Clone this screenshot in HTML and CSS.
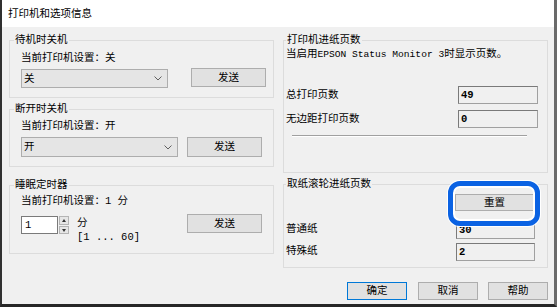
FILE: index.html
```html
<!DOCTYPE html>
<html lang="zh-CN">
<head>
    <meta charset="UTF-8">
    <title>打印机和选项信息</title>
    <link rel="stylesheet" href="styles.css">
</head>
<body>
    <div class="window">
        <div class="titlebar">打印机和选项信息</div>

        <div class="client">
            <div class="columns">
                <div class="col">
                    <fieldset class="group g-standby">
                        <legend>待机时关机</legend>
                        <div class="body">
                            <div class="line">当前打印机设置：关</div>
                            <div class="row">
                                <div class="combo combo-short">
                                    <span>关</span>
                                    <svg class="chev" viewBox="0 0 8 5"><path d="M0.5 0.5 L4 4 L7.5 0.5" fill="none" stroke="#606060" stroke-width="1"/></svg>
                                </div>
                                <button class="btn">发送</button>
                            </div>
                        </div>
                    </fieldset>

                    <fieldset class="group g-off">
                        <legend>断开时关机</legend>
                        <div class="body">
                            <div class="line">当前打印机设置：开</div>
                            <div class="row">
                                <div class="combo combo-long">
                                    <span>开</span>
                                    <svg class="chev" viewBox="0 0 8 5"><path d="M0.5 0.5 L4 4 L7.5 0.5" fill="none" stroke="#606060" stroke-width="1"/></svg>
                                </div>
                                <button class="btn">发送</button>
                            </div>
                        </div>
                    </fieldset>

                    <fieldset class="group g-sleep">
                        <legend>睡眠定时器</legend>
                        <div class="body">
                            <div class="line">当前打印机设置：1 分</div>
                            <div class="row">
                                <div class="spin">
                                    <div class="spin-input">1</div>
                                    <div class="spin-arrows">
                                        <div class="arrow arrow-up"></div>
                                        <div class="arrow arrow-down"></div>
                                    </div>
                                </div>
                                <div class="unit">
                                    <div>分</div>
                                    <div class="range">[1 ... 60]</div>
                                </div>
                                <button class="btn">发送</button>
                            </div>
                        </div>
                    </fieldset>
                </div>

                <div class="col">
                    <fieldset class="group g-count">
                        <legend>打印机进纸页数</legend>
                        <div class="body">
                            <div class="desc">当启用<span class="latin">EPSON Status Monitor 3</span>时显示页数。</div>
                            <div class="field first">
                                <span>总打印页数</span>
                                <div class="textbox">49</div>
                            </div>
                            <div class="field">
                                <span>无边距打印页数</span>
                                <div class="textbox">0</div>
                            </div>
                            <div class="separator"></div>
                        </div>
                    </fieldset>

                    <fieldset class="group g-roller">
                        <legend>取纸滚轮进纸页数</legend>
                        <div class="body">
                            <div class="reset-row">
                                <button class="btn btn-reset">重置</button>
                            </div>
                            <div class="field first">
                                <span>普通纸</span>
                                <div class="textbox">30</div>
                            </div>
                            <div class="field">
                                <span>特殊纸</span>
                                <div class="textbox">2</div>
                            </div>
                        </div>
                    </fieldset>
                </div>
            </div>

            <div class="footer">
                <button class="btn btn-dialog btn-default">确定</button>
                <button class="btn btn-dialog">取消</button>
                <button class="btn btn-dialog">帮助</button>
            </div>
        </div>
    </div>
</body>
</html>
```

FILE: styles.css
```css
* {
    margin: 0;
    padding: 0;
    box-sizing: border-box;
}

body {
    font-family: "Liberation Mono", "Noto Sans CJK SC", monospace;
    font-size: 10.5px;
    line-height: 14px;
    color: #000;
    background: #2b2b2b;
}

.window {
    width: 557px;
    height: 307px;
    background: #f0f0f0;
    border-left: 2px solid #303030;
    border-right: 3px solid #6a6a6a;
    border-bottom: 3px solid #262626;
    display: flex;
    flex-direction: column;
}

.titlebar {
    height: 27px;
    background: #fff;
    padding-left: 6px;
    line-height: 29px;
    font-size: 10.5px;
}

.client {
    padding: 6px 6px 0 7px;
}

.columns {
    display: flex;
    gap: 9px;
    height: 235px;
}

.col {
    width: 265px;
    display: flex;
    flex-direction: column;
}

/* group boxes */

.group {
    border: 1px solid #dcdcdc;
    margin: 0;
    padding: 0;
    min-width: 0;
}

.group legend {
    margin-left: 4px;
    padding: 0 1px;
    line-height: 14px;
}

.col + .col .group legend {
    margin-left: 2px;
}

.g-standby { height: 65px; }
.g-off { height: 65px; margin-top: 4px; }
.g-sleep { height: 76px; margin-top: 11px; }
.g-count { height: 140px; }
.g-roller { height: 91px; margin-top: 4px; }

.g-standby .body { padding: 0 7px 0 11px; }
.g-off .body { padding: 0 11px 0 11px; }
.g-sleep .body { padding: 0 11px 0 11px; }

.g-standby .line { margin-top: 4px; }
.g-standby .row { margin-top: 3px; }
.g-off .line { margin-top: 3px; }
.g-off .row { margin-top: 4px; }
.g-sleep .line { margin-top: 2px; }
.g-sleep .row { margin-top: 6px; }

.row {
    display: flex;
    align-items: flex-start;
}

.row .btn {
    margin-left: auto;
}

/* controls */

.btn {
    font: inherit;
    background: #e1e1e1;
    border: 1px solid #adadad;
    color: #000;
    width: 75px;
    height: 20px;
    line-height: 16px;
    text-align: center;
}

.g-standby .btn { height: 19px; }
.g-sleep .btn { height: 19px; }

.combo {
    height: 20px;
    background: #e5e5e5;
    border: 1px solid #adadad;
    display: flex;
    align-items: center;
    justify-content: space-between;
    padding: 0 5px 0 2px;
}

.combo-short {
    width: 147px;
    height: 19px;
    margin-top: 1px;
}

.combo-long {
    width: 157px;
}

.chev {
    width: 8px;
    height: 5px;
}

.spin {
    display: flex;
    margin-top: 2px;
}

.spin-input {
    width: 37px;
    height: 18px;
    background: #fff;
    border: 1px solid #7a7a7a;
    padding-left: 3px;
    line-height: 16px;
}

.spin-arrows {
    width: 10px;
    height: 18px;
    margin-left: 1px;
    display: flex;
    flex-direction: column;
    gap: 1px;
}

.arrow {
    flex: 1;
    background: #e6e6e6;
    border: 1px solid #b4b4b4;
    position: relative;
}

.arrow::after {
    content: "";
    position: absolute;
    left: 2px;
    border-left: 2px solid transparent;
    border-right: 2px solid transparent;
}

.arrow-up::after {
    top: 2px;
    border-bottom: 3px solid #333;
}

.arrow-down::after {
    top: 2px;
    border-top: 3px solid #333;
}

.unit {
    margin-left: 8px;
    margin-top: 2px;
}

.range {
    line-height: 15px;
}

/* page count groups */

.g-count .body,
.g-roller .body {
    padding: 0 9px 0 2px;
}

.g-roller .body {
    padding-right: 12px;
}

.desc {
    white-space: nowrap;
}

.latin {
    font-size: 9.6px;
}

.field {
    display: flex;
    align-items: center;
    justify-content: space-between;
    height: 18px;
    margin-top: 6px;
}

.g-count .field.first { margin-top: 24px; }
.g-roller .field.first { margin-top: 10px; }
.g-roller .field { margin-top: 4px; }

.field span {
    margin-top: -3px;
}

.g-count .field span {
    margin-top: 0;
}

.textbox {
    width: 80px;
    height: 18px;
    background: #f0f0f0;
    border: 1px solid #a0a0a0;
    border-top-color: #7a7a7a;
    border-left-color: #7a7a7a;
    padding-left: 2px;
    line-height: 16px;
    font-weight: bold;
}

.g-roller .textbox {
    width: 79px;
}

.separator {
    margin: 7px 11px 0 6px;
    border-top: 1px solid #a0a0a0;
    border-bottom: 1px solid #fff;
}

.reset-row {
    display: flex;
    justify-content: flex-end;
    margin-top: 3px;
}

.btn-reset {
    position: relative;
    width: 79px;
    height: 17px;
    line-height: 14px;
    margin-right: 1px;
}

/* blue highlight drawn over the reset button */
.btn-reset::after {
    content: "";
    position: absolute;
    left: -8px;
    top: -14px;
    right: -7px;
    bottom: -16px;
    border: 5px solid #0a62e3;
    border-radius: 12px;
    box-shadow: 0 0 0 1px #fff, inset 0 0 0 2px #fff;
    z-index: 2;
}

/* dialog buttons */

.footer {
    display: flex;
    justify-content: flex-end;
    gap: 10px;
    margin-top: 14px;
    padding-right: 0;
}

.btn-dialog {
    width: 60px;
    height: 18px;
    line-height: 15px;
}

.btn-default {
    border-color: #0078d7;
    margin-right: 1px;
}
```
